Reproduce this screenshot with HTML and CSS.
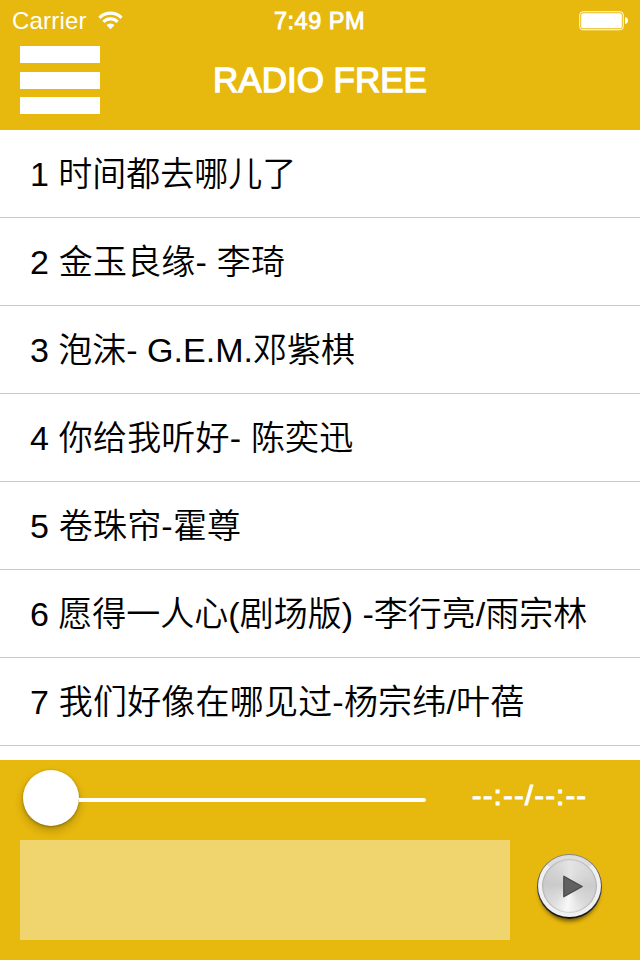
FILE: index.html
```
<!DOCTYPE html>
<html lang="zh-CN">
<head>
  <meta charset="UTF-8">
  <meta name="viewport" content="width=device-width, initial-scale=1.0">
  <title>Radio Free</title>
  <link rel="stylesheet" href="styles.css">
</head>
<body>
  <div class="app">
    <header class="header">
      <div class="status-bar">
        <div class="status-left">
          <span class="carrier">Carrier</span>
          <svg class="wifi" width="25" height="19" viewBox="0 0 25 19" fill="none" stroke="#fff" stroke-width="3.2">
            <path d="M1.5 6.8a15.5 15.5 0 0 1 22 0"/>
            <path d="M5.4 10.8a10 10 0 0 1 14.2 0"/>
            <path d="M12.5 18.2l-4-4.1a5.7 5.7 0 0 1 8 0z" fill="#fff" stroke="none"/>
          </svg>
        </div>
        <span class="time">7:49 PM</span>
        <div class="status-right">
          <svg width="50" height="20" viewBox="0 0 50 20">
            <rect x="0.75" y="0.75" width="43.5" height="18" rx="3" fill="none" stroke="#fff" stroke-width="1"/>
            <rect x="2.2" y="2.2" width="40.6" height="15.1" rx="1.5" fill="#fff"/>
            <path d="M46 6q3 0.5 3 3.5t-3 3.5z" fill="#fff"/>
          </svg>
        </div>
      </div>
      <div class="nav-bar">
        <button class="menu-btn" aria-label="Menu">
          <span></span>
          <span></span>
          <span></span>
        </button>
        <h1 class="title">RADIO FREE</h1>
      </div>
    </header>

    <ul class="song-list">
      <li>1 时间都去哪儿了</li>
      <li class="wide">2 金玉良缘- 李琦</li>
      <li>3 泡沫- G.E.M.邓紫棋</li>
      <li class="wide">4 你给我听好- 陈奕迅</li>
      <li class="wide">5 卷珠帘-霍尊</li>
      <li>6 愿得一人心(剧场版) -李行亮/雨宗林</li>
      <li class="wide">7 我们好像在哪见过-杨宗纬/叶蓓</li>
    </ul>

    <footer class="player">
      <div class="progress-row">
        <div class="slider">
          <div class="thumb"></div>
          <div class="track"></div>
        </div>
        <span class="duration">--:--/--:--</span>
      </div>
      <div class="control-row">
        <div class="info-box"></div>
        <button class="play-btn" aria-label="Play">
          <span class="play-face">
            <svg width="20" height="23" viewBox="0 0 20 23">
              <path d="M0.8 1.2v20.6L19.2 11.5z" fill="#606060" stroke="#484848" stroke-width="1.2" stroke-linejoin="round"/>
            </svg>
          </span>
        </button>
      </div>
    </footer>
  </div>
</body>
</html>
```
FILE: styles.css
```
* {
  box-sizing: border-box;
}

body, html {
  margin: 0;
  padding: 0;
  height: 100%;
  overflow: hidden;
  font-family: "Liberation Sans", "Noto Sans CJK SC", sans-serif;
}

button {
  border: none;
  background: none;
  padding: 0;
}

.app {
  width: 640px;
  height: 960px;
  display: flex;
  flex-direction: column;
  background-color: #fff;
}

.header {
  height: 130px;
  flex: none;
  background-color: #e7b80d;
  color: #fff;
}

.status-bar {
  height: 42px;
  padding: 0 11px 0 10px;
  display: grid;
  grid-template-columns: 1fr auto 1fr;
  align-items: center;
  font-size: 24px;
}

.status-left {
  display: flex;
  align-items: center;
  gap: 11px;
  padding-left: 2px;
}

.carrier {
  letter-spacing: 0.2px;
}

.wifi {
  margin-top: -2px;
}

.time {
  font-size: 23.5px;
  letter-spacing: 0.5px;
  -webkit-text-stroke: 0.9px #fff;
}

.status-right {
  display: flex;
  justify-content: flex-end;
}

.nav-bar {
  height: 76px;
  padding: 0 20px;
  display: grid;
  grid-template-columns: 80px 1fr 80px;
  align-items: center;
}

.menu-btn {
  height: 68px;
  display: flex;
  flex-direction: column;
  justify-content: space-between;
}

.menu-btn span {
  width: 80px;
  height: 17px;
  background-color: #fff;
}

.title {
  margin: 0;
  font-size: 35px;
  text-align: center;
  font-weight: normal;
  -webkit-text-stroke: 1.3px #fff;
}

.song-list {
  flex: 1;
  min-height: 0;
  margin: 0;
  padding: 0;
  overflow: hidden;
  list-style: none;
}

.song-list li {
  height: 88px;
  padding-left: 30px;
  line-height: 88px;
  font-size: 34px;
  font-weight: 350;
  color: #000;
  white-space: nowrap;
  border-bottom: 1px solid #c8c7cc;
}

.song-list .wide {
  letter-spacing: 0.2px;
}

.player {
  height: 200px;
  flex: none;
  background-color: #e7b80d;
}

.progress-row {
  height: 80px;
  display: flex;
  align-items: center;
  padding-left: 23px;
}

.slider {
  width: 403px;
  display: flex;
  align-items: center;
}

.thumb {
  width: 56px;
  height: 56px;
  margin-top: -4px;
  border-radius: 50%;
  background-color: #fff;
  box-shadow: 0 5px 10px rgba(0, 0, 0, 0.2), 0 1px 3px rgba(0, 0, 0, 0.3);
}

.track {
  flex: 1;
  height: 4px;
  border-radius: 0 2px 2px 0;
  background-color: #fff;
}

.duration {
  margin: -8px 0 0 46px;
  color: #fff;
  font-size: 28px;
  letter-spacing: 1.6px;
  -webkit-text-stroke: 1.2px #fff;
}

.control-row {
  display: flex;
  padding-left: 20px;
}

.info-box {
  width: 490px;
  height: 100px;
  background-color: rgba(255, 255, 255, 0.4);
}

.play-btn {
  width: 65px;
  height: 65px;
  margin: 14px 0 0 27px;
  border-radius: 50%;
  padding: 1px 1px 2px;
  background: linear-gradient(#888, #111);
  box-shadow: 0 5px 4px -3px rgba(70, 50, 0, 0.8);
}

.play-face {
  width: 63px;
  height: 62px;
  display: flex;
  align-items: center;
  justify-content: center;
  padding-left: 6px;
  border-radius: 50%;
  border: 4px solid #f0f0f0;
  border-top-color: #ddd;
  background: conic-gradient(#e4e4e4, #d8d8d8 50deg, #cccccc 90deg, #dadada 140deg, #f8f8f8 185deg, #dcdcdc 225deg, #cacaca 275deg, #d4d4d4 320deg, #e4e4e4);
  box-shadow: inset 0 0 2px rgba(0, 0, 0, 0.45);
}
```
